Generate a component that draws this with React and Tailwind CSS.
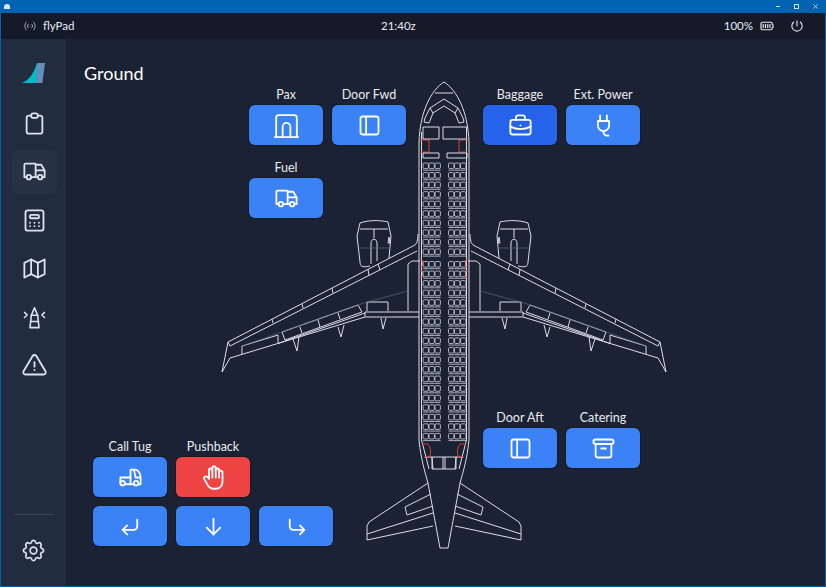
import {
  TbAccessPoint,
  TbAlertTriangle,
  TbArchive,
  TbArrowDown,
  TbBattery4,
  TbBriefcase,
  TbBuildingArch,
  TbCalculator,
  TbClipboard,
  TbCornerDownLeft,
  TbCornerDownRight,
  TbHandStop,
  TbLayoutSidebar,
  TbMap,
  TbPower,
  TbSettings,
  TbTir,
  TbTruck,
} from "react-icons/tb";

const iconClass = "size-[27px] stroke-[1.6]";

function NavIcon() {
  return (
    <svg viewBox="0 0 24 24" className="size-[27px]" fill="none" stroke="currentColor" strokeWidth="1.4" strokeLinejoin="round" strokeLinecap="round">
      <path d="M12 3.4 L9.2 10 L8 21 H16 L14.8 10 Z" />
      <path d="M9.2 10 H14.8" />
      <path d="M8.5 15.5 H15.5" />
      <path d="M3.1 7.5 L5.5 9.8 L3.1 12" />
      <path d="M20.9 7.5 L18.5 9.8 L20.9 12" />
    </svg>
  );
}

function PlugIcon() {
  return (
    <svg viewBox="0 0 24 24" className="size-[27px]" fill="none" stroke="currentColor" strokeWidth="1.6" strokeLinejoin="round" strokeLinecap="round">
      <path d="M9 3 V8 M15 3 V8" />
      <path d="M7 8 H17 V12 A5 5 0 0 1 7 12 Z" />
      <path d="M12 17 V18 A3 3 0 0 0 15 21 H16.5" />
    </svg>
  );
}

function Logo() {
  return (
    <svg viewBox="0 0 23 20" className="h-5 w-[23px]">
      <path d="M0 20 C6 17 11 13 15 0 H16 L14.5 20 Z" fill="#00bcc9" />
      <path d="M15.5 0 H23 L20.3 20 H14 Z" fill="#6a8cb8" />
    </svg>
  );
}

function SideItem({ icon, active }) {
  return (
    <div className={`flex h-11 w-[45px] items-center justify-center rounded-md text-[#dde3ec] ${active ? "bg-[#283245]" : ""}`}>
      {icon}
    </div>
  );
}

function GroundButton({ label, icon, className = "bg-[#3b82f6]" }) {
  return (
    <div className="flex w-[74px] flex-col items-center">
      {label && <span className="mb-[3px] h-4 whitespace-nowrap text-[12.5px] leading-[18px] text-[#e8ebf0]">{label}</span>}
      <div className={`flex h-10 w-full items-center justify-center rounded-md text-white shadow-[0_0_0_1px_#151b29] ${className}`}>{icon}</div>
    </div>
  );
}

// the seats, drawn row by row for one side
function SeatRows({ x }) {
  const rows = [];
  for (let i = 0; i < 29; i++) {
    rows.push(163 + i * 9.55 + (i > 9 ? 3 : 0));
  }
  return rows.map((y) => (
    <g key={y}>
      {[0, 6, 12].map((dx) => (
        <rect key={dx} x={x + dx} y={y} width="5.4" height="5.6" rx="1.2" />
      ))}
      <path d={`M${x} ${y + 7.2} H${x + 17.6}`} />
    </g>
  ));
}

function HalfPlane() {
  return (
    <g>
      {/* wing */}
      <path d="M418 234 C418 242 416 245 413 246 L228 342 L222 372 L230 358 L365 317 H419" />
      <path d="M230 346 L417 251" />
      <path d="M228 342 L230 346" />
      <path d="M365 312 H419" />
      <path d="M365 312 V317" />
      <path d="M242 346 L278 335 V343.5 M242 346 V354" />
      <path d="M282 332 L358 305 L362 312 L285 340 Z" />
      <path d="M278 343.5 L365 313" />
      <path d="M300 327 L302 333 M318 320 L320 327 M338 313 L340 319" />
      <path d="M293 339 L297 351 L299 337 M338 327 L341 337 L344 325 M381 318 L383 329 L386 318" />
      <path d="M367 311 V302 H388 V311" />
      <path d="M408 311 V264 L412 261 H420" />
      <path d="M272 319 L273 323 M302 304 L303 308 M332 288 L333 293 M368 269 L369 276 M378 264 L380 270" />
      <path d="M242 346 L367 302 L408 291" stroke="#5d6779" strokeWidth="0.7" />
      {/* engine */}
      <path d="M370 266 C362 268 360 266 360 262 L357 236 L360 223 C368 220 380 220 388 222 L391 236 L389 258" />
      <path d="M360 229 H388" />
      <path d="M371 264 V243 C371 238 377 238 377 243 V261 M374 229 V238" />
      <path d="M358 248 H391" stroke="#5d6779" strokeWidth="0.7" />
      <path d="M389 237 L390 243 L388 243 Z" />
      {/* tail */}
      <path d="M428 483 L369 522 L367 526 V540 L433 526" />
      <path d="M367 534 L433 513" />
      <path d="M431 494 L405 507 L407 515 L433 506" />
      {/* fuselage */}
      <path d="M444 82 C431 90 420 112 419 142 V440 C421 460 425 472 428 483 L440 548 H444" />
      <path d="M421.5 132 V440 L429 469" />
      {/* cockpit */}
      <path d="M435 93 H444 M444 99 L430 108 L433 113 L444 106" />
      <path d="M430 108 L425 118 L424 122 L429 123 L433 113" />
      {/* rear galley */}
      <path d="M432 457 H444 M432 469 H444 M432 457 V469 M443 457 V469" />
      <path d="M425 457 H432 L433 469" />
      {/* doors */}
      <g stroke="#dc3c32">
        <path d="M420 140 H429 V152 H419" />
        <path d="M420 260 H422.6 V266 H420 M420 271 H422.6 V277 H420" />
        <path d="M422 444 H428 C431 448 431 453 430 456 L424 457" />
      </g>
    </g>
  );
}

function Plane() {
  return (
    <svg
      viewBox="66 39 759 547"
      className="pointer-events-none absolute inset-0 h-[547px] w-[759px]"
      fill="none"
      stroke="#d9dee6"
      strokeWidth="1"
      strokeLinejoin="round"
    >
      <HalfPlane />
      <g transform="matrix(-1 0 0 1 888 0)">
        <HalfPlane />
      </g>
      {/* front galley boxes are not symmetric */}
      <path d="M423 127 H439 V139 H423 Z" />
      <path d="M443 127 H466.5 V139 H443 Z" />
      <path d="M423 153 H439 V158 H423 Z" />
      <path d="M447 153 H467 V158 H447 Z" />
      <g stroke="#d0d5dd" strokeWidth="0.8">
        <SeatRows x={423} />
        <SeatRows x={448.5} />
      </g>
    </svg>
  );
}

export default function App() {
  return (
    <div className="flex h-[587px] w-[826px] flex-col overflow-hidden border-x border-b border-[#0063b1] bg-[#1a2233] font-['Lato',sans-serif] text-white">
      {/* window title bar */}
      <div className="-mx-px flex h-[13px] shrink-0 items-center bg-[#0063b1] pl-1 pr-[8px]">
        <div className="h-[5px] w-[6px] rounded-t-sm bg-[#dbe7f3]" />
        <div className="ml-auto flex items-center gap-[14px] text-[#d7e6f3]">
          <span className="h-px w-[4px] bg-current" />
          <span className="size-[5px] border border-current" />
          <svg viewBox="0 0 6 6" className="size-[5px]" stroke="currentColor" strokeWidth="1">
            <path d="M0.5 0.5 L5.5 5.5 M5.5 0.5 L0.5 5.5" />
          </svg>
        </div>
      </div>

      {/* status bar */}
      <div className="relative flex h-[26px] shrink-0 items-center bg-[#141a28] pl-[21px] pr-[20px] text-[11.5px] text-[#e8ebf0]">
        <TbAccessPoint className="size-[16px] stroke-[1.5] text-[#9aa1ad]" />
        <span className="ml-[5px]">flyPad</span>
        <span className="absolute left-[380px]">21:40z</span>
        <span className="ml-auto">100%</span>
        <TbBattery4 className="ml-[5px] size-[18px] stroke-[1.6]" />
        <TbPower className="ml-[13px] size-[16px] stroke-[1.6]" />
      </div>

      <div className="flex min-h-0 flex-1">
        {/* sidebar */}
        <div className="flex w-[65px] shrink-0 flex-col items-center bg-[#222c3f] pt-[24px]">
          <Logo />
          <div className="ml-px mt-[18px] flex flex-col gap-[4.6px]">
            <SideItem icon={<TbClipboard className={iconClass} />} />
            <SideItem active icon={<TbTruck className={iconClass} />} />
            <SideItem icon={<TbCalculator className={iconClass} />} />
            <SideItem icon={<TbMap className={iconClass} />} />
            <SideItem icon={<NavIcon />} />
            <SideItem icon={<TbAlertTriangle className={iconClass} />} />
          </div>
          <div className="mt-auto h-px w-10 bg-[#3c4658]" />
          <div className="mb-[22px] mt-[22px] text-[#dde3ec]">
            <TbSettings className="size-[27px] stroke-[1.5]" />
          </div>
        </div>

        {/* ground page */}
        <div className="relative flex flex-1 flex-col justify-between">
          <Plane />

          <div className="relative flex items-start pl-[18px] pt-[23px]">
            <h1 className="w-[165px] text-[18px] leading-[22px]">Ground</h1>
            <div className="mt-[24px] flex w-[157px] flex-wrap gap-x-[9px] gap-y-[14px]">
              <GroundButton label="Pax" icon={<TbBuildingArch className="size-[31px] stroke-[1.4]" />} />
              <GroundButton label="Door Fwd" icon={<TbLayoutSidebar className={iconClass} />} />
              <GroundButton label="Fuel" icon={<TbTruck className={iconClass} />} />
            </div>
            <div className="ml-[77px] mt-[24px] flex gap-[9px]">
              <GroundButton label="Baggage" icon={<TbBriefcase className={iconClass} />} className="bg-[#2563eb]" />
              <GroundButton label="Ext. Power" icon={<PlugIcon />} />
            </div>
          </div>

          <div className="relative flex items-start pb-[40px] pl-[27px]">
            <div className="mt-[29px] flex w-[240px] flex-wrap gap-x-[9px] gap-y-[9px]">
              <GroundButton label="Call Tug" icon={<TbTir className={iconClass} />} />
              <GroundButton label="Pushback" icon={<TbHandStop className={iconClass} />} className="bg-[#ef4444]" />
              <div className="w-[74px]" />
              <GroundButton icon={<TbCornerDownLeft className={iconClass} />} />
              <GroundButton icon={<TbArrowDown className={iconClass} />} />
              <GroundButton icon={<TbCornerDownRight className={iconClass} />} />
            </div>
            <div className="ml-[150px] flex gap-[9px]">
              <GroundButton label="Door Aft" icon={<TbLayoutSidebar className={iconClass} />} />
              <GroundButton label="Catering" icon={<TbArchive className={iconClass} />} />
            </div>
          </div>
        </div>
      </div>
    </div>
  );
}
